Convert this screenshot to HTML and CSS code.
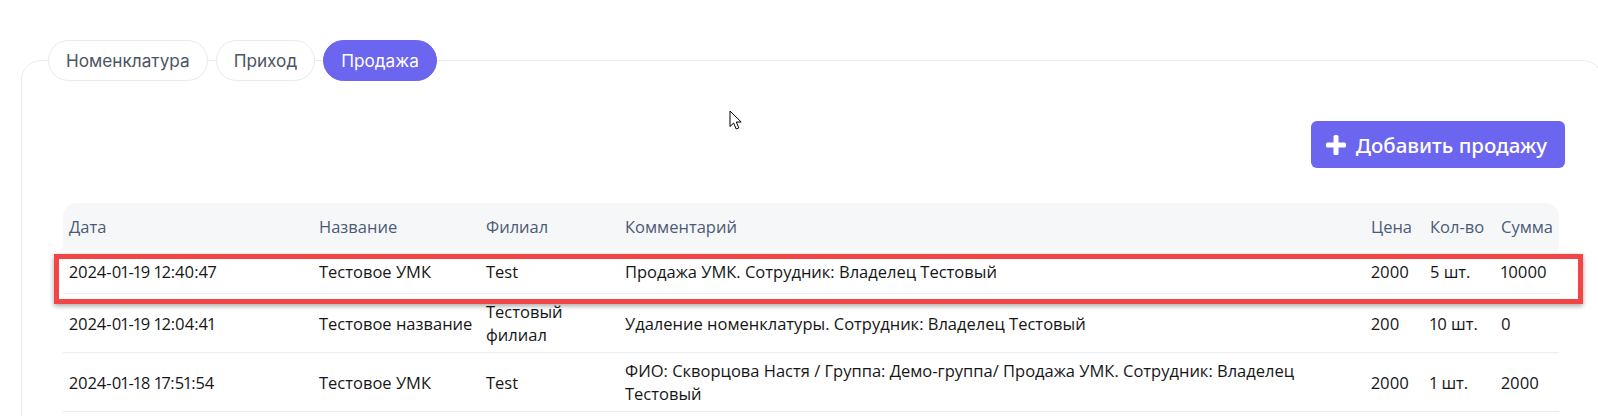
FILE: index.html
```html
<!DOCTYPE html>
<html lang="ru">
<head>
    <meta charset="UTF-8">
    <meta name="viewport" content="width=device-width, initial-scale=1.0">
    <title>Продажа</title>
    <link rel="stylesheet" href="styles.css">
</head>
<body>

    <div class="page">
        <div class="tabs">
            <button class="tab">Номенклатура</button>
            <button class="tab">Приход</button>
            <button class="tab tab-active">Продажа</button>
        </div>

        <div class="card">
            <div class="toolbar">
                <button class="btn-add">
                    <svg class="btn-icon" width="20" height="20" viewBox="0 0 20 20">
                        <rect x="7.5" y="0" width="5" height="20" rx="1.5" fill="#fff"/>
                        <rect x="0" y="7.5" width="20" height="5" rx="1.5" fill="#fff"/>
                    </svg>
                    Добавить продажу
                </button>
            </div>

            <!-- Sales table -->
            <table class="sales">
                <thead>
                    <tr>
                        <th class="col-date">Дата</th>
                        <th class="col-name">Название</th>
                        <th class="col-branch">Филиал</th>
                        <th class="col-comment">Комментарий</th>
                        <th class="col-price">Цена</th>
                        <th class="col-qty">Кол-во</th>
                        <th class="col-sum">Сумма</th>
                    </tr>
                </thead>
                <tbody>
                    <tr>
                        <td>2024-01-19 12:40:47</td>
                        <td>Тестовое УМК</td>
                        <td>Test</td>
                        <td>Продажа УМК. Сотрудник: Владелец Тестовый</td>
                        <td>2000</td>
                        <td>5 шт.</td>
                        <td>10000</td>
                    </tr>
                    <tr>
                        <td>2024-01-19 12:04:41</td>
                        <td>Тестовое название</td>
                        <td>Тестовый филиал</td>
                        <td>Удаление номенклатуры. Сотрудник: Владелец Тестовый</td>
                        <td>200</td>
                        <td>10 шт.</td>
                        <td>0</td>
                    </tr>
                    <tr>
                        <td>2024-01-18 17:51:54</td>
                        <td>Тестовое УМК</td>
                        <td>Test</td>
                        <td>ФИО: Скворцова Настя / Группа: Демо-группа/ Продажа УМК. Сотрудник: Владелец Тестовый</td>
                        <td>2000</td>
                        <td>1 шт.</td>
                        <td>2000</td>
                    </tr>
                </tbody>
            </table>
        </div>

        <!-- Screenshot annotation and pointer -->
        <div class="annotation"></div>
        <svg class="cursor" width="14" height="21" viewBox="0 0 14 21">
            <path d="M1 1 L1 16.5 L4.6 13 L7.2 19 L9.8 17.9 L7.3 12 L12.2 12 Z" fill="#fff" stroke="#000" stroke-width="1" stroke-linejoin="round"/>
        </svg>
    </div>

</body>
</html>
```

FILE: styles.css
```css
* {
    box-sizing: border-box;
}

body {
    margin: 0;
    background-color: #fff;
    font-family: "Open Sans", "Noto Sans", sans-serif;
    overflow: hidden;
}

.page {
    position: relative;
    padding-top: 40px;
}

.tabs {
    display: flex;
    gap: 8px;
    margin-left: 48px;
    position: relative;
    z-index: 1;
}

.tab {
    height: 41px;
    padding: 0 17px;
    background-color: #fff;
    border: 1px solid #e6eaf2;
    border-radius: 21px;
    font-family: Inter, sans-serif;
    font-size: 17.2px;
    color: #4b5563;
    cursor: pointer;
}

.tab-active {
    background-color: #6b65ef;
    border-color: #6b65ef;
    color: #fff;
}

.card {
    width: 1582px;
    margin-left: 21px;
    margin-top: -21px;
    padding: 60px 43px 40px 41px;
    border: 1px solid #e7ecf4;
    border-radius: 20px;
    background-color: #fff;
}

.toolbar {
    display: flex;
    justify-content: flex-end;
    margin-right: -6px;
}

.btn-add {
    display: flex;
    align-items: center;
    gap: 10px;
    height: 47px;
    padding: 0 18px 0 15px;
    background-color: #6b65ef;
    color: #fff;
    border: none;
    border-radius: 6px;
    font-family: "Noto Sans", sans-serif;
    font-weight: 500;
    font-size: 20.5px;
    cursor: pointer;
}

.sales {
    width: 100%;
    margin-top: 35px;
    border-collapse: separate;
    border-spacing: 0;
    table-layout: fixed;
    font-size: 16.5px;
    font-variant-numeric: proportional-nums;
}

.sales th {
    height: 47px;
    padding: 0 2px 0 6px;
    background-color: #f6f7f9;
    color: #4b5b74;
    font-weight: normal;
    text-align: left;
}

.sales th:first-child {
    border-top-left-radius: 14px;
}

.sales th:last-child {
    border-top-right-radius: 14px;
}

.sales tbody tr {
    height: 44px;
}

.sales td {
    padding: 6px 2px 6px 6px;
    line-height: 23px;
    color: #161616;
    border-bottom: 1px solid #e9edf3;
    vertical-align: middle;
}

.col-date { width: 250px; }
.col-name { width: 167px; }
.col-branch { width: 139px; }
.col-comment { width: 746px; }
.col-price { width: 59px; }
.col-qty { width: 71px; }

.annotation {
    position: absolute;
    left: 54px;
    top: 254px;
    width: 1529px;
    height: 50px;
    border: 5px solid #f24545;
    box-shadow: 0 2px 5px rgba(0, 0, 0, 0.35);
    pointer-events: none;
}

.cursor {
    position: absolute;
    left: 729px;
    top: 110px;
}
```
